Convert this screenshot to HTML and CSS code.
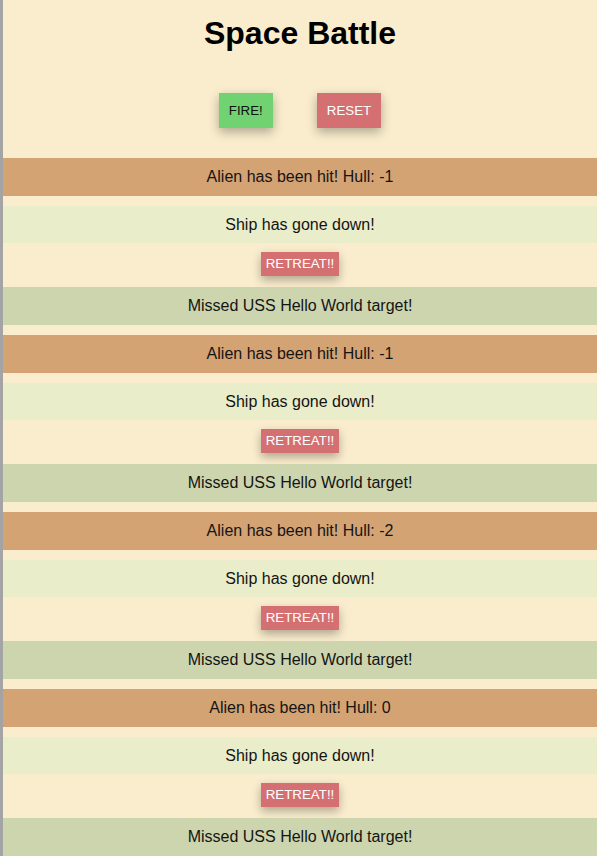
FILE: index.html
```
<!DOCTYPE html>
<html lang="en">
<head>
<meta charset="utf-8">
<title>Space Battle</title>
<link rel="stylesheet" href="styles.css">
</head>
<body>
<div class="page">
  <h1 class="title">Space Battle</h1>
  <div class="controls">
    <button class="btn btn-fire">FIRE!</button>
    <button class="btn btn-reset">RESET</button>
  </div>
  <div class="log">
    <div class="round">
      <div class="row row-hit">Alien has been hit! Hull: -1</div>
      <div class="row row-down">Ship has gone down!</div>
      <div class="retreat-wrap"><button class="btn-retreat">RETREAT!!</button></div>
      <div class="row row-miss">Missed USS Hello World target!</div>
    </div>
    <div class="round">
      <div class="row row-hit">Alien has been hit! Hull: -1</div>
      <div class="row row-down">Ship has gone down!</div>
      <div class="retreat-wrap"><button class="btn-retreat">RETREAT!!</button></div>
      <div class="row row-miss">Missed USS Hello World target!</div>
    </div>
    <div class="round">
      <div class="row row-hit">Alien has been hit! Hull: -2</div>
      <div class="row row-down">Ship has gone down!</div>
      <div class="retreat-wrap"><button class="btn-retreat">RETREAT!!</button></div>
      <div class="row row-miss">Missed USS Hello World target!</div>
    </div>
    <div class="round">
      <div class="row row-hit">Alien has been hit! Hull: 0</div>
      <div class="row row-down">Ship has gone down!</div>
      <div class="retreat-wrap"><button class="btn-retreat">RETREAT!!</button></div>
      <div class="row row-miss">Missed USS Hello World target!</div>
    </div>
  </div>
</div>
</body>
</html>
```
FILE: styles.css
```
html, body {
  margin: 0;
  padding: 0;
  background: #faedcd;
}
body {
  font-family: "Liberation Sans", Arial, sans-serif;
  color: #141414;
}
.page {
  border-left: 3px solid #a4a4a4;
  min-height: 100vh;
  display: flex;
  flex-direction: column;
}
.title {
  margin: 0;
  padding-top: 15px;
  font-size: 32px;
  line-height: 37px;
  font-weight: bold;
  text-align: center;
  color: #000;
}
.controls {
  display: flex;
  justify-content: center;
  gap: 44px;
  margin-top: 41px;
}
.btn {
  font-family: "Liberation Sans", Arial, sans-serif;
  font-size: 13.333px;
  line-height: 15px;
  padding: 10px 10px;
  border: none;
  box-shadow: 0 4px 10px rgba(0, 0, 0, 0.3);
  cursor: pointer;
}
.btn-fire {
  background: #70d270;
  color: #111;
}
.btn-reset {
  background: #d57072;
  color: #fff;
}
.log {
  margin-top: 30px;
  display: flex;
  flex-direction: column;
  gap: 10px;
}
.round {
  display: flex;
  flex-direction: column;
}
.row {
  text-align: center;
  font-size: 16px;
  line-height: 18px;
  padding: 10px 0;
}
.row-hit {
  background: #d4a373;
  margin-bottom: 10px;
}
.row-down {
  background: #e9edc9;
  padding-bottom: 9px;
}
.row-miss {
  background: #ccd5ae;
}
.retreat-wrap {
  display: flex;
  justify-content: center;
  padding: 9px 0 11px;
}
.btn-retreat {
  font-family: "Liberation Sans", Arial, sans-serif;
  font-size: 13.333px;
  line-height: 16px;
  padding: 4px 5px;
  border: none;
  background: #d57072;
  color: #fff;
  box-shadow: 0 4px 10px rgba(0, 0, 0, 0.3);
}
```
